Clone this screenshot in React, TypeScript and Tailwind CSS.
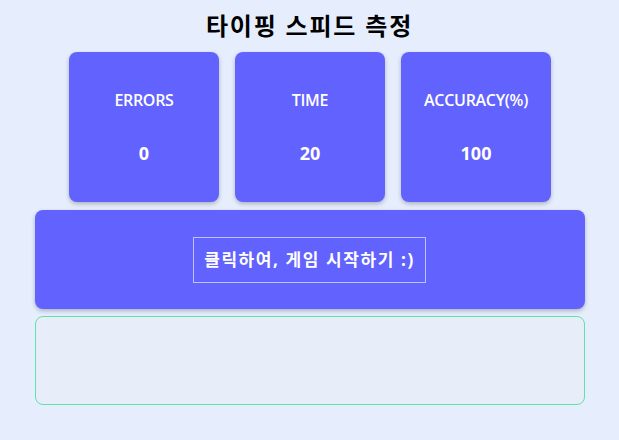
import React from "react";

const font = { fontFamily: '"Open Sans", "Noto Sans CJK KR", sans-serif' };

function StatCard({ label, value }: { label: string; value: string }) {
  return (
    <div className="flex h-[150px] w-[150px] flex-col items-center rounded-lg bg-[#6262ff] pt-[38px] text-white shadow-[0_2px_4px_rgba(0,0,0,0.25)]">
      <div className="text-[16px] font-semibold leading-5 tracking-[-0.3px]">{label}</div>
      <div className="mt-[31px] text-[18px] font-bold leading-6">{value}</div>
    </div>
  );
}

export default function App() {
  return (
    <div className="min-h-[440px] w-full bg-[#e6eefe]" style={font}>
      <div className="mx-auto flex w-[550px] flex-col items-center pt-[10px]">
        <h1 className="text-[24px] font-bold leading-8 tracking-[1.8px] text-black">타이핑 스피드 측정</h1>
        <div className="mt-[10px] flex gap-[16px] pl-[1px]">
          <StatCard label="ERRORS" value="0" />
          <StatCard label="TIME" value="20" />
          <StatCard label="ACCURACY(%)" value="100" />
        </div>
        <div className="mt-[8px] flex h-[99px] w-full items-center justify-center rounded-lg bg-[#6262ff] shadow-[0_2px_4px_rgba(0,0,0,0.25)]">
          <button className="flex h-[46px] items-center border border-white/60 px-[10px] text-[17px] font-bold tracking-[1.6px] text-white">
            클릭하여, 게임 시작하기 :)
          </button>
        </div>
        <textarea
          className="mt-[7px] h-[89px] w-full resize-none rounded-lg border border-[#5de3a6] bg-[#e8eef9] outline-none"
          style={font}
        />
      </div>
    </div>
  );
}
